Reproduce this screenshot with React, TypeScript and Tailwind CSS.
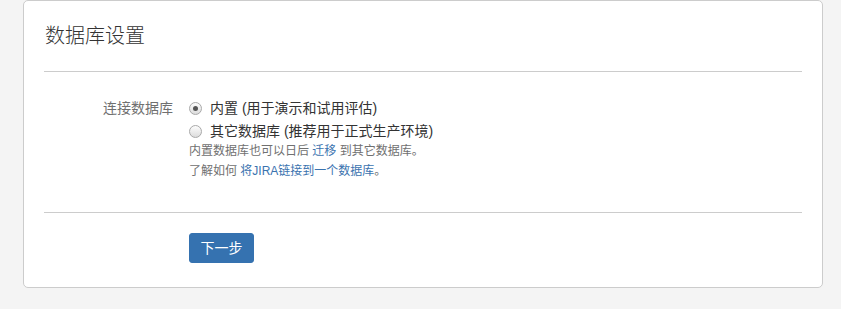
const cjk = { fontFamily: '"Liberation Sans", Arial, "Noto Sans CJK SC", sans-serif' };

const Radio = ({ checked }: { checked?: boolean }) => (
  <span className="flex h-[13px] w-[13px] shrink-0 items-center justify-center rounded-full border border-[#a9a9a9] bg-gradient-to-b from-[#fdfdfd] to-[#dcdcdc]">
    {checked && <span className="h-[5px] w-[5px] rounded-full bg-[#555]" />}
  </span>
);

export default function App() {
  return (
    <div className="min-h-[309px] bg-[#f4f4f4] pl-[23px]" style={cjk}>
      <div className="w-[800px] rounded-[5px] border border-[#cccccc] bg-white px-5 pt-[23px] pb-[24px]">
        <h2 className="pl-px text-[20px] leading-[24px] font-light text-[#333]">数据库设置</h2>
        <div className="mt-[23px] h-px bg-[#cccccc]" />

        <div className="mt-[26px] flex">
          <div className="w-[129px] text-right text-[14px] leading-[20px] text-[#707070]">连接数据库</div>
          <div className="ml-4 flex flex-col">
            <label className="flex h-[20px] items-center gap-2 text-[14px] leading-[20px] text-[#333]">
              <Radio checked />
              <span>内置 (用于演示和试用评估)</span>
            </label>
            <label className="mt-[3px] flex h-[20px] items-center gap-2 text-[14px] leading-[20px] text-[#333]">
              <Radio />
              <span>其它数据库 (推荐用于正式生产环境)</span>
            </label>
            <div className="text-[12px] leading-[20px] text-[#707070]">
              <p>
                内置数据库也可以日后 <a className="text-[#3b73af]">迁移</a> 到其它数据库。
              </p>
              <p>
                了解如何 <a className="text-[#3b73af]">将JIRA链接到一个数据库</a>。
              </p>
            </div>
          </div>
        </div>

        <div className="mt-[31px] h-px bg-[#cccccc]" />

        <div className="mt-5 pl-[145px]">
          <button className="h-[30px] w-[65px] rounded-[3px] border border-[#3572b0] bg-[#3572b0] text-[14px] leading-[20px] text-white">
            下一步
          </button>
        </div>
      </div>
    </div>
  );
}
